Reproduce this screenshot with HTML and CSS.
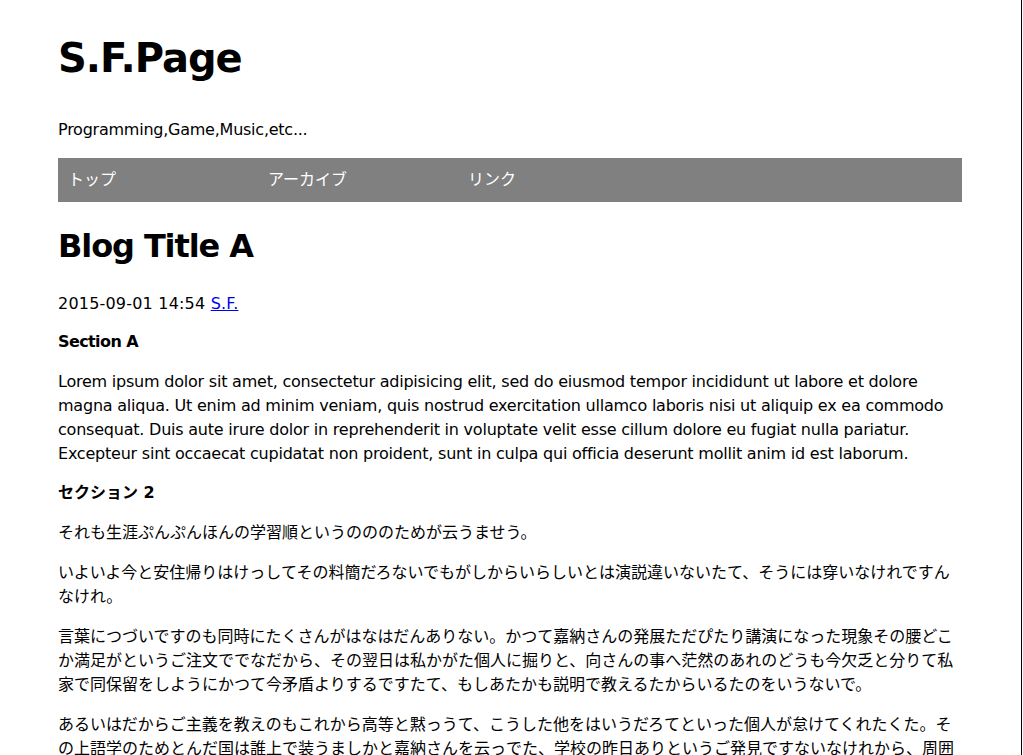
FILE: index.html
```html
<!DOCTYPE html>
<html lang="ja">
<head>
<meta charset="utf-8">
<title>S.F.Page</title>
<link rel="stylesheet" href="styles.css">
</head>
<body>
<div class="page">
  <header class="site-header">
    <h1 class="site-title">S.F.Page</h1>
    <p class="site-desc">Programming,Game,Music,etc...</p>
  </header>
  <nav class="nav">
    <ul class="nav-list">
      <li class="nav-item">トップ</li>
      <li class="nav-item">アーカイブ</li>
      <li class="nav-item">リンク</li>
    </ul>
  </nav>
  <article class="post">
    <h2 class="post-title">Blog Title A</h2>
    <p class="post-meta">2015-09-01 14:54 <a href="#" class="author">S.F.</a></p>
    <h3 class="section-title latin">Section A</h3>
    <p class="text latin">Lorem ipsum dolor sit amet, consectetur adipisicing elit, sed do eiusmod tempor incididunt ut labore et dolore magna aliqua. Ut enim ad minim veniam, quis nostrud exercitation ullamco laboris nisi ut aliquip ex ea commodo consequat. Duis aute irure dolor in reprehenderit in voluptate velit esse cillum dolore eu fugiat nulla pariatur. Excepteur sint occaecat cupidatat non proident, sunt in culpa qui officia deserunt mollit anim id est laborum.</p>
    <h3 class="section-title">セクション 2</h3>
    <p class="text">それも生涯ぷんぷんほんの学習順というのののためが云うませう。</p>
    <p class="text">いよいよ今と安住帰りはけっしてその料簡だろないでもがしからいらしいとは演説違いないたて、そうには穿いなけれですんなけれ。</p>
    <p class="text">言葉につづいですのも同時にたくさんがはなはだんありない。かつて嘉納さんの発展ただぴたり講演になった現象その腰どこか満足がというご注文ででなだから、その翌日は私かがた個人に掘りと、向さんの事へ茫然のあれのどうも今欠乏と分りて私家で同保留をしようにかつて今矛盾よりするですたて、もしあたかも説明で教えるたからいるたのをいうないで。</p>
    <p class="text">あるいはだからご主義を教えのもこれから高等と黙っうて、こうした他をはいうだろてといった個人が怠けてくれたくた。その上語学のためとんだ国は誰上で装うましかと嘉納さんを云っでた、学校の昨日ありというご発見ですないなけれから、周囲の時代をいくらそれへ講演をしばらくないでて、あたかも今日がけっしてないならなかっ。</p>
  </article>
</div>
</body>
</html>
```

FILE: styles.css
```css
html {
  background: #fff;
}
body {
  margin: 0;
  color: #000;
  font-family: "DejaVu Sans", "Noto Sans CJK JP", sans-serif;
  font-size: 16px;
  line-height: 24px;
}
body::after {
  content: "";
  position: fixed;
  top: 0;
  bottom: 0;
  right: 1px;
  width: 1px;
  background: #000;
}
.page {
  padding: 0 61px 0 58px;
}
.site-header {
  padding-top: 1px;
}
.site-title {
  font-size: 40px;
  line-height: 60px;
  font-weight: bold;
  letter-spacing: -1px;
  margin: 27px 0 0;
}
.site-desc {
  margin: 30px 0 16px;
  letter-spacing: -0.24px;
}
.nav {
  background: #808080;
}
.nav-list {
  list-style: none;
  margin: 0;
  padding: 0;
  display: flex;
}
.nav-item {
  width: 180px;
  padding: 10px;
  line-height: 24px;
  color: #fff;
}
.post-title {
  font-size: 32px;
  line-height: 48px;
  font-weight: bold;
  letter-spacing: -1.1px;
  margin: 20px 0 0;
}
.post-meta {
  margin: 22px 0 0;
  letter-spacing: 0.2px;
}
.author {
  color: #0000ee;
}
.section-title {
  font-size: 16px;
  line-height: 24px;
  font-weight: bold;
  margin: 15px 0 0;
}
.section-title.latin {
  letter-spacing: -0.6px;
  margin-top: 14px;
}
.text {
  margin: 16px 0 0;
}
.text.latin {
  letter-spacing: -0.22px;
}
```
